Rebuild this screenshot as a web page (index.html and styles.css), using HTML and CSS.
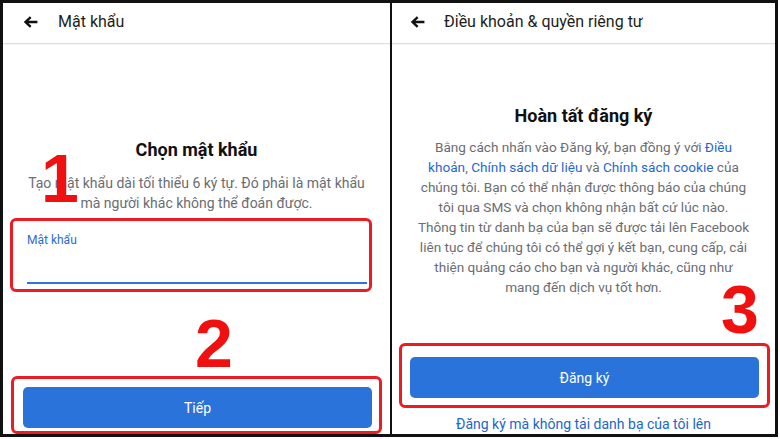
FILE: index.html
```html
<!DOCTYPE html>
<html lang="vi">
<head>
<meta charset="utf-8">
<title>Đăng ký</title>
<link rel="stylesheet" href="styles.css">
</head>
<body>
<div class="frame">
  <section class="panel panel-left">
    <header class="bar">
      <svg class="back" viewBox="0 0 16 13" width="15" height="12" aria-hidden="true"><path d="M15.5 6.5H3M8.2 1.2L2.6 6.5l5.6 5.3" fill="none" stroke="#111" stroke-width="2.6"/></svg>
      <span class="bar-title">Mật khẩu</span>
    </header>
    <h1 class="title title-left">Chọn mật khẩu</h1>
    <p class="sub">Tạo mật khẩu dài tối thiểu 6 ký tự. Đó phải là mật khẩu<br>mà người khác không thể đoán được.</p>
    <div class="mark mark-field">
      <div class="field-label">Mật khẩu</div>
      <div class="field-line"></div>
    </div>
    <div class="mark mark-next">
      <div class="btn">Tiếp</div>
    </div>
    <span class="num num-1">1</span>
    <span class="num num-2">2</span>
  </section>
  <div class="divider"></div>
  <section class="panel panel-right">
    <header class="bar bar-right">
      <svg class="back" viewBox="0 0 16 13" width="15" height="12" aria-hidden="true"><path d="M15.5 6.5H3M8.2 1.2L2.6 6.5l5.6 5.3" fill="none" stroke="#111" stroke-width="2.6"/></svg>
      <span class="bar-title">Điều khoản &amp; quyền riêng tư</span>
    </header>
    <h1 class="title title-right">Hoàn tất đăng ký</h1>
    <p class="para">Bằng cách nhấn vào Đăng ký, bạn đồng ý với <span class="link">Điều</span><br><span class="link">khoản</span>, <span class="link">Chính sách dữ liệu</span> và <span class="link">Chính sách cookie</span> của<br>chúng tôi. Bạn có thể nhận được thông báo của chúng<br>tôi qua SMS và chọn không nhận bất cứ lúc nào.<br>Thông tin từ danh bạ của bạn sẽ được tải lên Facebook<br>liên tục để chúng tôi có thể gợi ý kết bạn, cung cấp, cải<br>thiện quảng cáo cho bạn và người khác, cũng như<br>mang đến dịch vụ tốt hơn.</p>
    <div class="mark mark-signup">
      <div class="btn">Đăng ký</div>
    </div>
    <div class="alt-link">Đăng ký mà không tải danh bạ của tôi lên</div>
    <span class="num num-3">3</span>
  </section>
</div>
</body>
</html>
```

FILE: styles.css
```css
* { box-sizing: border-box; }
html, body { margin: 0; padding: 0; background: #fff; }
body { font-family: Roboto, "Noto Sans", "Liberation Sans", sans-serif; color: #1c1e21; }

.frame {
  width: 778px;
  height: 437px;
  border: 3px solid #111;
  display: flex;
  overflow: hidden;
  background: #fff;
}
.panel {
  position: relative;
  display: flex;
  flex-direction: column;
  background: #fff;
}
.panel-left { width: 387px; }
.panel-right { flex: 1; }
.divider { width: 2px; background: #111; }

.bar {
  height: 41px;
  padding: 0 0 3px 20px;
  display: flex;
  align-items: center;
  border-bottom: 1px solid #dedede;
  box-shadow: 0 1px 1px rgba(0,0,0,0.03);
}
.bar-right { padding-left: 18px; }
.back { flex: none; }
.bar-title { margin-left: 20px; font-size: 16px; color: #1c1e21; }
.bar-right .bar-title { margin-left: 19px; }

.title {
  margin: 0;
  font-size: 18px;
  line-height: 22px;
  font-weight: 700;
  text-align: center;
  color: #111;
}
.title-left { margin-top: 95px; }
.title-right { margin-top: 61px; }

.sub, .para {
  margin: 12px 0 0;
  font-size: 14px;
  line-height: 20px;
  color: #6a6d72;
  text-align: center;
  white-space: nowrap;
}
.para { margin-top: 10px; font-size: 13.6px; }
.link { color: #1f68d4; }

.mark {
  border: 3px solid #ec1c24;
  border-radius: 6px;
}
.mark-field {
  margin: 5px 18px 0 7px;
  height: 74px;
  padding: 12px 2px 0 14px;
}
.field-label { font-size: 12px; line-height: 14px; color: #2a6bd2; }
.field-line { margin-top: 35px; height: 2px; background: #2d74db; }

.mark-next {
  margin: 84px 8px 0 8px;
  padding: 8px 7px 3px 9px;
}
.mark-signup {
  margin: 46px 5px 0 7px;
  padding: 11px 8px 7px 8px;
}
.btn {
  height: 41px;
  border-radius: 5px;
  background: #2a73db;
  color: #fff;
  font-size: 14px;
  display: flex;
  align-items: center;
  justify-content: center;
}
.alt-link {
  margin-top: 6px;
  font-size: 14px;
  line-height: 20px;
  color: #2066cc;
  text-align: center;
}

.num {
  position: absolute;
  font-family: "Liberation Sans", Arial, sans-serif;
  font-weight: 700;
  font-size: 68px;
  line-height: 1;
  color: #f0100f;
}
.num-1 { left: 38px; top: 141px; }
.num-2 { left: 192px; top: 306px; }
.num-3 { left: 329px; top: 272px; }
```
